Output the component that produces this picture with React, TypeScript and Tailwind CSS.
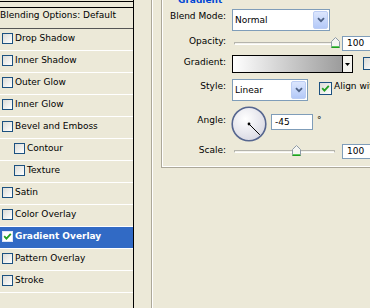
import React from "react";

type Item = { label: string; indent?: boolean; selected?: boolean; checked?: boolean };

const items: Item[] = [
  { label: "Drop Shadow" },
  { label: "Inner Shadow" },
  { label: "Outer Glow" },
  { label: "Inner Glow" },
  { label: "Bevel and Emboss" },
  { label: "Contour", indent: true },
  { label: "Texture", indent: true },
  { label: "Satin" },
  { label: "Color Overlay" },
  { label: "Gradient Overlay", selected: true, checked: true },
  { label: "Pattern Overlay" },
  { label: "Stroke" },
];

function Check() {
  return (
    <svg width="9" height="9" viewBox="0 0 9 9">
      <path d="M1.2 4.2 L3.4 6.6 L7.8 1.8" fill="none" stroke="#21A121" strokeWidth="1.8" />
    </svg>
  );
}

function Box({ checked, selected, size }: { checked?: boolean; selected?: boolean; size: string }) {
  return (
    <div
      className={`${size} shrink-0 border flex items-center justify-center ${
        selected ? "border-[#DDE6F6] bg-white" : "border-[#1C5180] bg-linear-to-br from-[#DCDCD7] to-white"
      }`}
    >
      {checked && <Check />}
    </div>
  );
}

function Chevron() {
  return (
    <svg width="8" height="6" viewBox="0 0 8 6">
      <path d="M1 1.2 L4 4.2 L7 1.2" fill="none" stroke="#4D6185" strokeWidth="1.8" />
    </svg>
  );
}

function Select({ w, text }: { w: string; text: string }) {
  return (
    <div className={`${w} h-[22px] shrink-0 border border-[#7F9DB9] bg-white flex items-stretch p-[1px]`}>
      <span className="flex-1 pl-[1px] flex items-center">{text}</span>
      <div className="w-[15px] rounded-[2px] border border-[#BCCDF4] bg-linear-to-b from-[#DCE6FD] to-[#B4C9F8] flex items-center justify-center">
        <Chevron />
      </div>
    </div>
  );
}

function Thumb({ pos }: { pos: string }) {
  return (
    <svg className={`absolute top-[1px] ${pos}`} width="9" height="11" viewBox="0 0 9 11">
      <path d="M0.5 4.5 L4.5 0.5 L8.5 4.5 V10.5 H0.5 Z" fill="#F5F5F1" stroke="#8E9AA6" />
      <path d="M1 9.5 H8" stroke="#5CC85C" />
      <path d="M0.5 10.5 H8.5" stroke="#1F9F1F" />
    </svg>
  );
}

function Slider({ pos }: { pos: string }) {
  return (
    <div className="relative ml-[6px] w-[107px] h-[15px] shrink-0">
      <div className="absolute left-[2px] right-[4px] top-[6px] h-[3px] rounded-[1px] border border-[#B5B4AC] border-b-white bg-[#F2F1EA]" />
      <Thumb pos={pos} />
    </div>
  );
}

function Field({ w, h, text, pl }: { w: string; h: string; text: string; pl: string }) {
  return (
    <div className={`${w} ${h} shrink-0 border border-[#7F9DB9] bg-white ${pl} flex items-center`}>{text}</div>
  );
}

function Label({ text, pt }: { text: string; pt: string }) {
  return <div className={`w-[63px] shrink-0 text-right ${pt}`}>{text}</div>;
}

export default function App() {
  return (
    <div className="w-[370px] h-[308px] overflow-hidden bg-[#ECE9D8] flex text-[9px] leading-[11px] font-['DejaVu_Sans',sans-serif] text-black">
      {/* Left list */}
      <div className="w-[134px] shrink-0 h-full border-r border-black flex flex-col">
        <div className="h-[1px]" />
        <div className="h-[1px] bg-black" />
        <div className="h-[5px]" />
        <div className="h-[22px] border-t border-black border-b border-b-[#555] pt-[2px] whitespace-nowrap">
          Blending Options: Default
        </div>
        {items.map((it) => (
          <div
            key={it.label}
            className={`h-[22px] border-b border-white flex items-center gap-[2px] pb-[2px] whitespace-nowrap ${
              it.indent ? "pl-[14px]" : "pl-[2px]"
            } ${it.selected ? "bg-[#316AC5] text-white font-bold" : ""}`}
          >
            <Box size="w-[11px] h-[11px]" checked={it.checked} selected={it.selected} />
            <span>{it.label}</span>
          </div>
        ))}
      </div>

      {/* Right side */}
      <div className="flex-1 pl-[17px] flex">
        <div className="border-l border-[#ACA899] h-full">
          <div className="border-l border-white h-full pl-[8px]">
            <div className="w-[240px] border-l border-b border-[#ACA899]">
              <div className="border-l border-b border-white flex flex-col pb-[7px] whitespace-nowrap">
                <div className="h-[4px] overflow-hidden">
                  <div className="mt-[-5px] ml-[15px] leading-[11px] font-bold text-[#0046D5]">Gradient</div>
                </div>

                {/* Blend Mode */}
                <div className="mt-[5px] h-[22px] flex items-start">
                  <Label text="Blend Mode:" pt="pt-[2px]" />
                  <div className="ml-[6px]">
                    <Select w="w-[98px]" text="Normal" />
                  </div>
                </div>

                {/* Opacity */}
                <div className="mt-[5px] h-[15px] flex items-start">
                  <Label text="Opacity:" pt="pt-[0px]" />
                  <Slider pos="left-[99px]" />
                  <div className="ml-[3px]">
                    <Field w="w-[36px]" h="h-[15px]" text="100" pl="pl-[4px]" />
                  </div>
                </div>

                {/* Gradient */}
                <div className="mt-[4px] h-[18px] flex items-start">
                  <Label text="Gradient:" pt="pt-[2px]" />
                  <div className="ml-[6px] w-[121px] h-[18px] shrink-0 border border-black flex">
                    <div className="flex-1 border-r border-black bg-linear-to-r from-white to-[#9C9C9C]" />
                    <div className="w-[9px] bg-[#F4F3EE] flex items-center justify-center">
                      <svg width="5" height="3" viewBox="0 0 5 3">
                        <path d="M0 0 H5 L2.5 3 Z" fill="black" />
                      </svg>
                    </div>
                  </div>
                  <div className="ml-[10px] mt-[2px]">
                    <Box size="w-[13px] h-[13px]" />
                  </div>
                </div>

                {/* Style */}
                <div className="mt-[6px] h-[22px] flex items-start">
                  <Label text="Style:" pt="pt-[2px]" />
                  <div className="ml-[6px]">
                    <Select w="w-[76px]" text="Linear" />
                  </div>
                  <div className="ml-[11px] mt-[3px]">
                    <Box size="w-[13px] h-[13px]" checked />
                  </div>
                  <span className="ml-[2px] pt-[2px]">Align with Layer</span>
                </div>

                {/* Angle */}
                <div className="mt-[5px] h-[36px] flex items-start">
                  <Label text="Angle:" pt="pt-[9px]" />
                  <svg className="ml-[5px] shrink-0" width="36" height="36" viewBox="0 0 36 36">
                    <defs>
                      <radialGradient id="dialg" cx="40%" cy="35%" r="70%">
                        <stop offset="0" stopColor="#FFFFFF" />
                        <stop offset="1" stopColor="#D8D8E2" />
                      </radialGradient>
                    </defs>
                    <circle cx="18" cy="18" r="16.8" fill="url(#dialg)" stroke="#56668F" strokeWidth="1.6" />
                    <circle cx="18" cy="18" r="1.4" fill="black" />
                    <line x1="18" y1="18" x2="28.8" y2="28.8" stroke="black" strokeWidth="1" />
                  </svg>
                  <div className="ml-[4px] mt-[8px]">
                    <Field w="w-[42px]" h="h-[16px]" text="-45" pl="pl-[3px]" />
                  </div>
                  <span className="ml-[4px] pt-[9px]">°</span>
                </div>

                {/* Scale */}
                <div className="mt-[2px] h-[15px] flex items-start">
                  <Label text="Scale:" pt="pt-[1px]" />
                  <Slider pos="left-[60px]" />
                  <div className="ml-[3px]">
                    <Field w="w-[36px]" h="h-[15px]" text="100" pl="pl-[4px]" />
                  </div>
                </div>
              </div>
            </div>
          </div>
        </div>
      </div>
    </div>
  );
}
